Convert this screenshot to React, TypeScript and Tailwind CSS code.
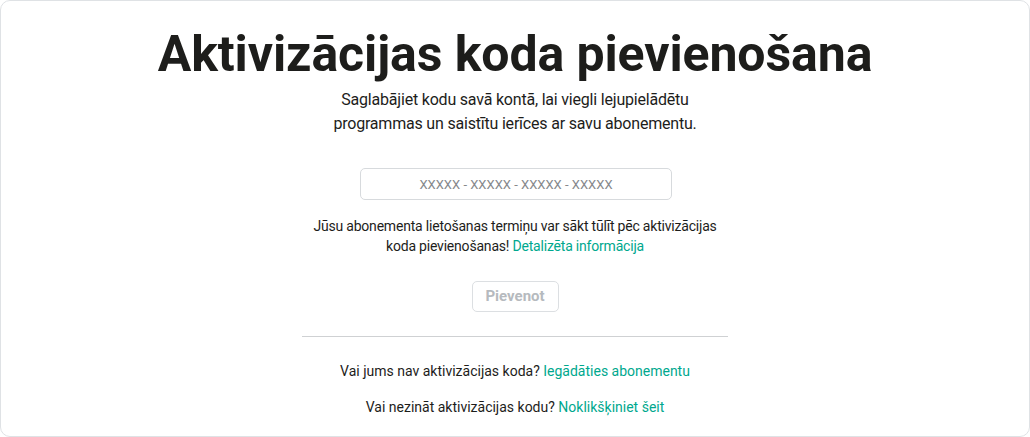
import React, { useState } from 'react';

const App: React.FC = () => {
  const [code, setCode] = useState<string>('');

  return (
    <div className="min-h-screen bg-white" style={{ fontFamily: 'Roboto, "Noto Sans", sans-serif' }}>
      <div className="h-[437px] border border-[#dfe2e5] rounded-[10px] bg-white flex flex-col items-center pt-[25px] text-[#1d1d1b]">
        <h1 className="text-[50px] leading-[56px] font-bold tracking-[-0.1px] text-center">
          Aktivizācijas koda pievienošana
        </h1>
        <p className="mt-[6px] text-[16px] leading-[24px] tracking-[-0.2px] text-center w-[400px]">
          Saglabājiet kodu savā kontā, lai viegli lejupielādētu programmas un saistītu ierīces ar savu abonementu.
        </p>

        <input
          type="text"
          value={code}
          onChange={(e) => setCode(e.target.value)}
          placeholder="XXXXX - XXXXX - XXXXX - XXXXX"
          className="mt-[32px] ml-[2px] w-[312px] h-[32px] border border-[#d7dadd] rounded-[5px] text-center text-[13px] text-[#1d1d1b] placeholder:text-[#85888b] outline-none"
        />

        <div className="mt-[16px] text-[14px] leading-[20px] tracking-[-0.2px] text-center">
          <p>Jūsu abonementa lietošanas termiņu var sākt tūlīt pēc aktivizācijas</p>
          <p>
            koda pievienošanas!{' '}
            <a href="#" className="text-[#00a88e]">Detalizēta informācija</a>
          </p>
        </div>

        <button
          type="button"
          disabled
          className="mt-[25px] w-[87px] h-[31px] border border-[#dcdfe2] rounded-[5px] text-[15px] font-bold text-[#b6babe]"
        >
          Pievenot
        </button>

        <div className="mt-[24px] w-[426px] h-px bg-[#cfd1d3]" />

        <p className="mt-[24px] text-[14px] leading-[20px] text-center">
          Vai jums nav aktivizācijas koda?{' '}
          <a href="#" className="text-[#00a88e]">Iegādāties abonementu</a>
        </p>
        <p className="mt-[16px] text-[14px] leading-[20px] text-center">
          Vai nezināt aktivizācijas kodu?{' '}
          <a href="#" className="text-[#00a88e]">Noklikšķiniet šeit</a>
        </p>
      </div>
    </div>
  );
};

export default App;
